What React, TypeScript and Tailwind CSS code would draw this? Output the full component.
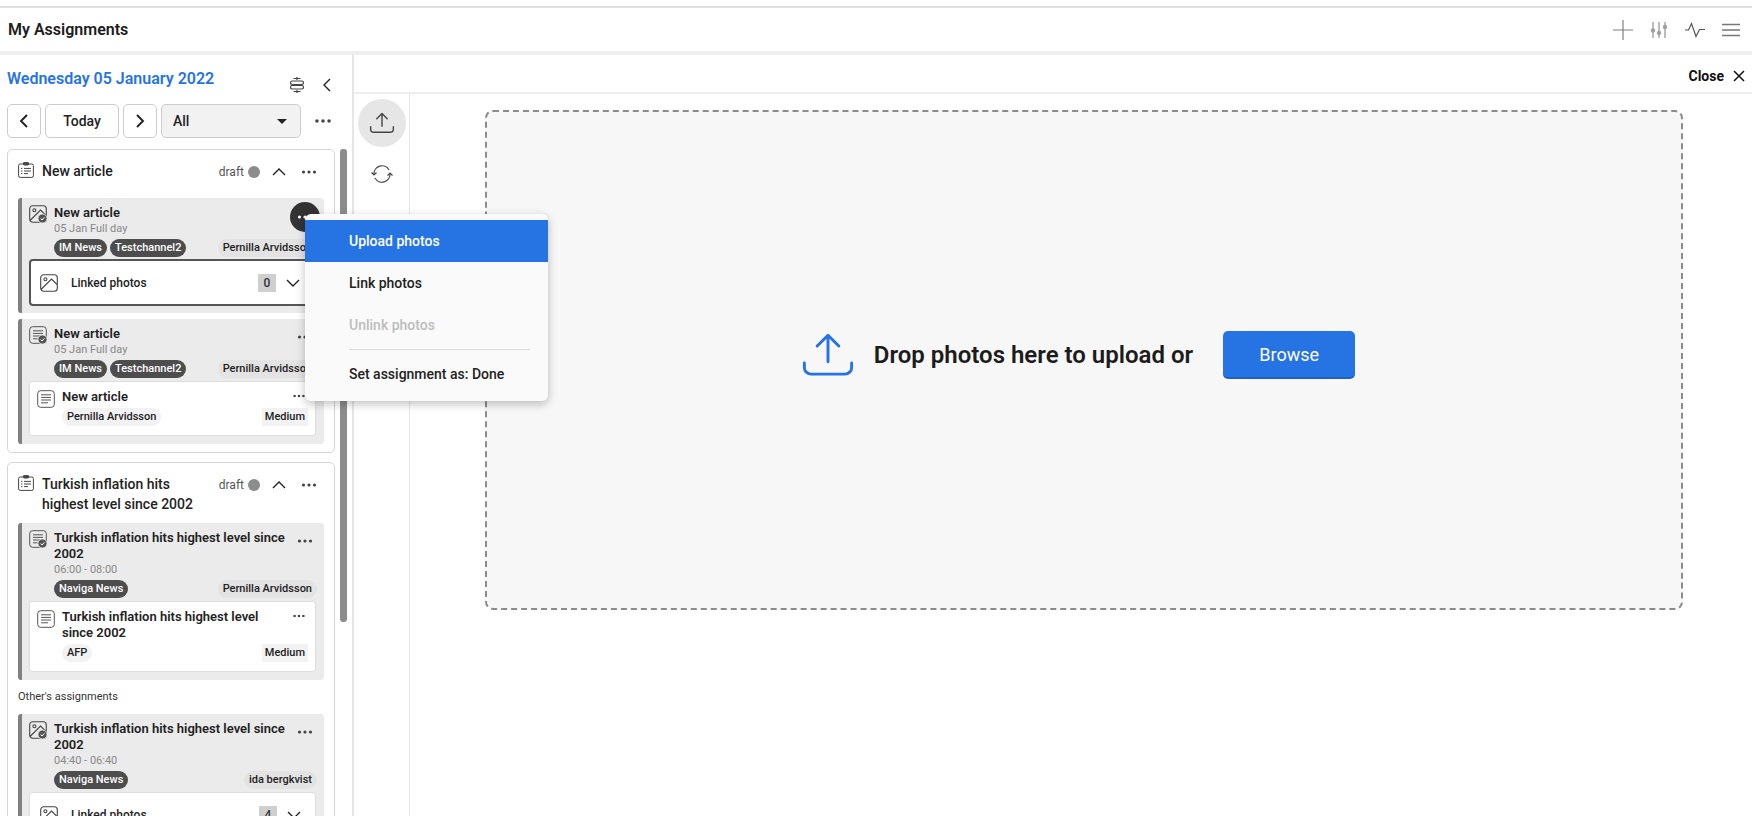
import { ReactNode } from 'react';

const font = { fontFamily: "Roboto, 'Noto Sans', sans-serif" };

function Dots({ dark = false }: { dark?: boolean }) {
  return (
    <svg width="16" height="4" viewBox="0 0 16 4" fill={dark ? '#fff' : '#444'}>
      <circle cx="2.5" cy="2" r="1.6" />
      <circle cx="8" cy="2" r="1.6" />
      <circle cx="13.5" cy="2" r="1.6" />
    </svg>
  );
}

function Chevron({ dir, bold = false }: { dir: 'left' | 'right' | 'up' | 'down'; bold?: boolean }) {
  const paths = { left: 'M12 3 6 9l6 6', right: 'M6 3l6 6-6 6', up: 'M3 12l6-6 6 6', down: 'M3 6l6 6 6-6' };
  return (
    <svg width="18" height="18" viewBox="0 0 18 18" fill="none" stroke="#222" strokeWidth={bold ? 1.9 : 1.4}>
      <path d={paths[dir]} />
    </svg>
  );
}

function Check() {
  return (
    <g>
      <circle cx="13.5" cy="13.5" r="4.6" fill="#555" stroke="#ebebeb" strokeWidth="1" />
      <path d="M11.6 13.6l1.4 1.4 2.4-2.7" fill="none" stroke="#fff" strokeWidth="1" />
    </g>
  );
}

function PhotoIcon({ check = false }: { check?: boolean }) {
  return (
    <svg width="18" height="18" viewBox="0 0 18 18" fill="none" stroke="#444" strokeWidth="1.1" className="shrink-0">
      <rect x="0.7" y="0.7" width="16.6" height="16.600" rx="3" />
      <circle cx="5.4" cy="5.2" r="1.5" />
      <path d="M1 15.500 11.500 5l5.500 5.500" />
      {check && <Check />}
    </svg>
  );
}

function ArticleIcon({ check = false }: { check?: boolean }) {
  return (
    <svg width="18" height="18" viewBox="0 0 18 18" fill="none" stroke="#555" strokeWidth="1" className="shrink-0">
      <rect x="0.7" y="0.7" width="16.6" height="16.600" rx="3" />
      <path d="M4 4.800h10M4 7.400h10M4 10h10M4 12.800h7" />
      {check && <Check />}
    </svg>
  );
}

function AssignmentIcon() {
  return (
    <svg width="16" height="16" viewBox="0 0 16 16" fill="none" stroke="#444" strokeWidth="1" className="shrink-0">
      <rect x="0.600" y="2" width="14.800" height="13.400" rx="1.600" />
      <rect x="5.500" y="0.400" width="5" height="2.600" rx="0.600" fill="#444" />
      <path d="M3 6.400h1.400M6 6.400h7M3 9h1.400M6 9h7M3 11.600h1.400M6 11.600h4" />
    </svg>
  );
}

function UploadIcon({ size, color, width }: { size: number; color: string; width: number }) {
  return (
    <svg width={size} height={size} viewBox="0 0 24 24" fill="none" stroke={color} strokeWidth={width} strokeLinecap="round" strokeLinejoin="round">
      <path d="M12 15V3.500M7.200 8 12 3.200 16.800 8" />
      <path d="M1.500 15.500v2a3 3 0 0 0 3 3h15a3 3 0 0 0 3-3v-2" />
    </svg>
  );
}

function Pill({ children }: { children: ReactNode }) {
  return <span className="h-[18px] px-[5px] rounded-full bg-[#4d4d4d] text-white text-[11px] font-medium leading-[18px] whitespace-nowrap">{children}</span>;
}

function Person({ children, bg = 'bg-[#e3e3e3]' }: { children: ReactNode; bg?: string }) {
  return <span className={`h-[18px] px-[5px] rounded-full ${bg} text-[#222] text-[11px] font-medium leading-[18px] whitespace-nowrap`}>{children}</span>;
}

function LinkedPhotos({ count, active = false }: { count: number; active?: boolean }) {
  return (
    <div className={`flex items-center ml-[7px] mr-[8px] pr-[12px] bg-white rounded-[4px] ${active ? 'h-[47px] -mb-[1px] mt-[2px] pl-[9px] border-2 border-[#555]' : 'h-[46px] mt-[3px] pl-[10px] border border-[#ddd]'}`}>
      <PhotoIcon />
      <span className="ml-[13px] flex-1 text-[12px] font-medium text-[#222]">Linked photos</span>
      <span className="w-[18px] h-[18px] bg-[#cfcfcf] text-center text-[12px] leading-[18px] font-medium text-[#333]">{count}</span>
      <span className="ml-[8px] flex"><Chevron dir="down" /></span>
    </div>
  );
}

function ArticleBox({ title, source }: { title: string; source: string }) {
  return (
    <div className="flex mt-[3px] ml-[7px] mr-[8px] pl-[7px] pr-[7px] pt-[7px] pb-[9px] bg-white rounded-[3px] border border-[#ddd]">
      <span className="mt-[1px]"><ArticleIcon /></span>
      <div className="ml-[7px] flex-1 min-w-0">
        <div className="flex items-start justify-between">
          <div className="text-[13px] font-semibold leading-[16px] text-[#222] w-[205px]">{title}</div>
          <span className="mt-[5px] mr-[1px] scale-[0.8] flex"><Dots /></span>
        </div>
        <div className="flex items-center justify-between mt-[3px]">
          <Person bg="bg-[#f2f2f2]">{source}</Person>
          <span className="h-[18px] px-[3px] bg-[#f2f2f2] text-[11px] font-medium leading-[18px] text-[#222]">Medium</span>
        </div>
      </div>
    </div>
  );
}

function SubCard({ icon, title, time, pills, person, children, active = false }: { icon: ReactNode; title: string; time: string; pills: string[]; person: string; children: ReactNode; active?: boolean }) {
  return (
    <div className="bg-[#ebebeb] border-l-4 border-[#808080] rounded-[3px] pb-[8px] mx-[10px]">
      <div className="flex pl-[7px] pr-[7px] pt-[6px]">
        <span className="mt-[1px]">{icon}</span>
        <div className="ml-[7px] flex-1 min-w-0">
          <div className="flex items-start justify-between">
            <div className="pt-[1px] text-[13px] font-semibold leading-[16px] text-[#222] w-[236px]">{title}</div>
            {active ? (
              <span className="w-[30px] h-[30px] rounded-full bg-[#333] flex items-center justify-center -mr-[3px] -mt-[2px] -mb-[12px]"><Dots dark /></span>
            ) : (
              <span className="mt-[10px] mr-[4px] flex"><Dots /></span>
            )}
          </div>
          <div className="text-[11px] leading-[15px] text-[#888]">{time}</div>
          <div className="flex items-center justify-between mt-[3px]">
            <div className="flex gap-[3px]">{pills.map((p) => <Pill key={p}>{p}</Pill>)}</div>
            <Person>{person}</Person>
          </div>
        </div>
      </div>
      {children}
    </div>
  );
}

function CardHeader({ title }: { title: string }) {
  return (
    <div className="flex items-start pl-[10px] pr-[17px] pt-[11px]">
      <span className="mt-[1px]"><AssignmentIcon /></span>
      <div className="ml-[8px] w-[162px] text-[14px] font-medium leading-[20px] text-[#222]">{title}</div>
      <div className="ml-auto flex items-center h-[20px] mt-[1px]">
        <span className="text-[12px] text-[#555]">draft</span>
        <span className="ml-[4px] w-[12px] h-[12px] rounded-full bg-[#8c8c8c]" />
        <span className="ml-[10px] flex"><Chevron dir="up" /></span>
        <span className="ml-[13px] flex"><Dots /></span>
      </div>
    </div>
  );
}

function LeftPanel() {
  return (
    <aside className="w-[354px] shrink-0 border-r-2 border-[#e6e6e6] overflow-hidden">
      <div className="flex items-start justify-between pl-[7px] pr-[16px] h-[49px]">
        <div className="mt-[14px] text-[16px] font-semibold leading-[20px] text-[#2673e4]">Wednesday 05 January 2022</div>
        <div className="flex items-center gap-[12px] mt-[21px]">
          <svg width="18" height="18" viewBox="0 0 18 18" fill="none" stroke="#444" strokeWidth="1.200">
            <path d="M5.500 2.500h7M9 1v3M5.500 15.500h7M9 14v3" />
            <rect x="2.500" y="5" width="13" height="3.500" rx="1.700" />
            <rect x="2.500" y="9.500" width="13" height="3.500" rx="1.700" />
          </svg>
          <Chevron dir="left" />
        </div>
      </div>
      <div className="flex items-center pl-[7px] pr-[16px] h-[34px]">
        <button className="w-[34px] h-[34px] border border-[#ccc] rounded-[5px] flex items-center justify-center"><Chevron dir="left" bold /></button>
        <button className="ml-[4px] w-[74px] h-[34px] border border-[#ccc] rounded-[5px] text-[14px] font-medium text-[#222]">Today</button>
        <button className="ml-[4px] w-[34px] h-[34px] border border-[#ccc] rounded-[5px] flex items-center justify-center"><Chevron dir="right" bold /></button>
        <div className="ml-[4px] w-[140px] h-[34px] border border-[#ccc] rounded-[5px] bg-[#f2f2f2] flex items-center justify-between pl-[11px] pr-[13px]">
          <span className="text-[14px] font-medium text-[#222]">All</span>
          <span className="w-0 h-0 border-x-[5px] border-x-transparent border-t-[5px] border-t-[#222]" />
        </div>
        <span className="ml-[14px] flex scale-[1.100]"><Dots /></span>
      </div>
      <div className="flex mt-[11px] pl-[7px] items-start">
        <div className="w-[328px] shrink-0">
          <div className="border border-[#d6d6d6] rounded-[5px] h-[304px]">
            <CardHeader title="New article" />
            <div className="mt-[16px]">
              <SubCard icon={<PhotoIcon check />} title="New article" time="05 Jan Full day" pills={['IM News', 'Testchannel2']} person="Pernilla Arvidsson" active>
                <LinkedPhotos count={0} active />
              </SubCard>
            </div>
            <div className="mt-[6px]">
              <SubCard icon={<ArticleIcon check />} title="New article" time="05 Jan Full day" pills={['IM News', 'Testchannel2']} person="Pernilla Arvidsson">
                <ArticleBox title="New article" source="Pernilla Arvidsson" />
              </SubCard>
            </div>
          </div>
          <div className="border border-[#d6d6d6] rounded-[5px] mt-[9px] pb-[10px]">
            <CardHeader title="Turkish inflation hits highest level since 2002" />
            <div className="mt-[9px]">
              <SubCard icon={<ArticleIcon check />} title="Turkish inflation hits highest level since 2002" time="06:00 - 08:00" pills={['Naviga News']} person="Pernilla Arvidsson">
                <ArticleBox title="Turkish inflation hits highest level since 2002" source="AFP" />
              </SubCard>
            </div>
            <div className="mt-[9px] ml-[10px] text-[11px] leading-[16px] text-[#333]">Other's assignments</div>
            <div className="mt-[9px]">
              <SubCard icon={<PhotoIcon check />} title="Turkish inflation hits highest level since 2002" time="04:40 - 06:40" pills={['Naviga News']} person="ida bergkvist">
                <LinkedPhotos count={4} />
              </SubCard>
            </div>
          </div>
        </div>
        <div className="ml-[5px] w-[7px] h-[473px] rounded-[3px] bg-[#8c8c8c] shrink-0" />
      </div>
    </aside>
  );
}

function ActionMenu() {
  return (
    <div className="absolute left-[305px] top-[214px] w-[243px] py-[6px] rounded-[6px] bg-[#fafafa] shadow-[0_3px_10px_rgba(0,0,0,0.25)] text-[14px] font-medium text-[#222]">
      <div className="h-[42px] pl-[44px] flex items-center bg-[#2673e4] text-white">Upload photos</div>
      <div className="h-[42px] pl-[44px] flex items-center">Link photos</div>
      <div className="h-[42px] pl-[44px] flex items-center text-[#bdbdbd]">Unlink photos</div>
      <div className="ml-[44px] mr-[18px] mt-[3px] border-t border-[#d9d9d9]" />
      <div className="h-[42px] mt-[3px] pl-[44px] flex items-center">Set assignment as: Done</div>
    </div>
  );
}

export default function App() {
  return (
    <div style={font} className="relative h-screen overflow-hidden bg-white pt-[6px]">
      <div className="h-[49px] border-t-2 border-b-4 border-t-[#e0e0e0] border-b-[#eeeeee] mr-[4px] flex items-center justify-between pl-[8px] pr-[12px]">
        <h1 className="text-[16px] font-semibold text-[#1c1c1c]">My Assignments</h1>
        <div className="flex items-center gap-[17px]">
          <svg width="20" height="20" viewBox="0 0 20 20" stroke="#808080" strokeWidth="1.200" fill="none"><path d="M10 0v20M0 10h20" /></svg>
          <svg width="18" height="18" viewBox="0 0 18 18" stroke="#bdbdbd" strokeWidth="2" fill="#a0a0a0"><path d="M3 1v16M9 1v16M15 1v16" /><circle cx="3" cy="9.500" r="2.200" stroke="none" /><circle cx="9" cy="12" r="2.200" stroke="none" /><circle cx="15" cy="6" r="2.200" stroke="none" /></svg>
          <svg width="20" height="20" viewBox="0 0 20 20" stroke="#555" strokeWidth="1.200" fill="none"><path d="M0 10h3.500l3-6.500 4.500 13 3.500-7H20" /></svg>
          <svg width="18" height="20" viewBox="0 0 18 20" stroke="#777" strokeWidth="1.300" fill="none"><path d="M0 4.500h18M0 10h18M0 15.500h18" /></svg>
        </div>
      </div>
      <div className="flex h-[761px] mr-[4px]">
        <LeftPanel />
        <main className="flex-1 min-w-0 flex flex-col">
          <div className="h-[39px] border-b-2 border-[#eeeeee] flex items-center justify-end pt-[5px] pr-[7px] shrink-0">
            <span className="text-[14px] font-bold text-[#111]">Close</span>
            <svg className="ml-[9px]" width="12" height="12" viewBox="0 0 12 12" stroke="#111" strokeWidth="1.500"><path d="M1 1l10 10M11 1 1 11" /></svg>
          </div>
          <div className="flex flex-1">
            <div className="w-[56px] border-r border-[#e6e6e6] flex flex-col items-center pt-[5px] shrink-0">
              <div className="w-[48px] h-[48px] rounded-full bg-[#e6e6e6] flex items-center justify-center"><UploadIcon size={26} color="#444" width={1.300} /></div>
              <svg className="mt-[15px]" width="24" height="24" viewBox="0 0 24 24" fill="none" stroke="#444" strokeWidth="1.200">
                <path d="M19 8A8 8 0 0 0 4 12.500" />
                <path d="M1.500 10.500 4 13l2.500-2.500" />
                <path d="M5 16a8 8 0 0 0 15-4.500" />
                <path d="M17.500 13.500 20 11l2.500 2.500" />
              </svg>
            </div>
            <div className="flex-1 min-w-0 pl-[75px] pr-[69px] pt-[16px]">
              <div className="h-[500px] pb-[10px] pr-[12px] bg-[#f7f7f7] border-2 border-dashed border-[#8c8c8c] rounded-[8px] flex items-center justify-center">
                <UploadIcon size={54} color="#2673e4" width={1.300} />
                <span className="ml-[19px] text-[24px] font-semibold text-[#1c1c1c]">Drop photos here to upload or</span>
                <button className="ml-[30px] w-[132px] h-[48px] rounded-[5px] bg-[#2673e4] border-b-2 border-[#1f62c6] text-white text-[18px]">Browse</button>
              </div>
            </div>
          </div>
        </main>
      </div>
      <ActionMenu />
    </div>
  );
}
